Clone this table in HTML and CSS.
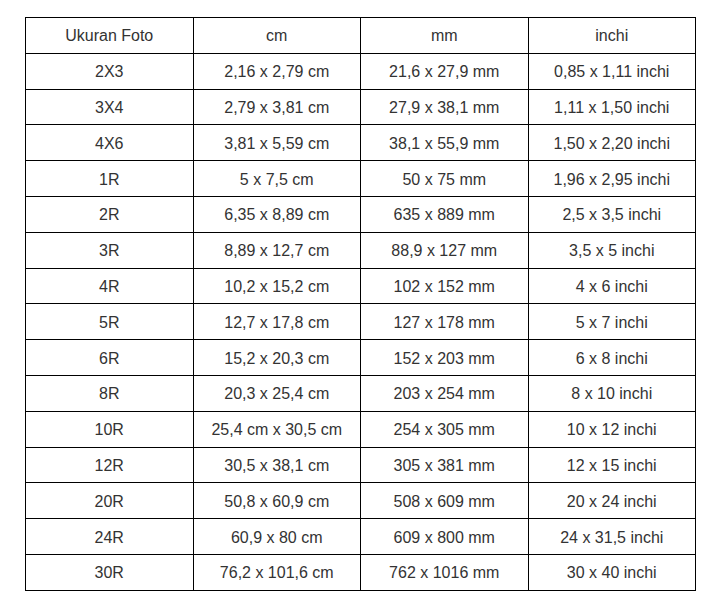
FILE: index.html
```html
<!DOCTYPE html>
<html>
<head>
<meta charset="utf-8">
<link rel="stylesheet" href="styles.css">
</head>
<body>
<table class="sizes">
<thead>
<tr><th>Ukuran Foto</th><th>cm</th><th>mm</th><th>inchi</th></tr>
</thead>
<tbody>
<tr><td>2X3</td><td>2,16 x 2,79 cm</td><td>21,6 x 27,9 mm</td><td>0,85 x 1,11 inchi</td></tr>
<tr><td>3X4</td><td>2,79 x 3,81 cm</td><td>27,9 x 38,1 mm</td><td>1,11 x 1,50 inchi</td></tr>
<tr><td>4X6</td><td>3,81 x 5,59 cm</td><td>38,1 x 55,9 mm</td><td>1,50 x 2,20 inchi</td></tr>
<tr><td>1R</td><td>5 x 7,5 cm</td><td>50 x 75 mm</td><td>1,96 x 2,95 inchi</td></tr>
<tr><td>2R</td><td>6,35 x 8,89 cm</td><td>635 x 889 mm</td><td>2,5 x 3,5 inchi</td></tr>
<tr><td>3R</td><td>8,89 x 12,7 cm</td><td>88,9 x 127 mm</td><td>3,5 x 5 inchi</td></tr>
<tr><td>4R</td><td>10,2 x 15,2 cm</td><td>102 x 152 mm</td><td>4 x 6 inchi</td></tr>
<tr><td>5R</td><td>12,7 x 17,8 cm</td><td>127 x 178 mm</td><td>5 x 7 inchi</td></tr>
<tr><td>6R</td><td>15,2 x 20,3 cm</td><td>152 x 203 mm</td><td>6 x 8 inchi</td></tr>
<tr><td>8R</td><td>20,3 x 25,4 cm</td><td>203 x 254 mm</td><td>8 x 10 inchi</td></tr>
<tr><td>10R</td><td>25,4 cm x 30,5 cm</td><td>254 x 305 mm</td><td>10 x 12 inchi</td></tr>
<tr><td>12R</td><td>30,5 x 38,1 cm</td><td>305 x 381 mm</td><td>12 x 15 inchi</td></tr>
<tr><td>20R</td><td>50,8 x 60,9 cm</td><td>508 x 609 mm</td><td>20 x 24 inchi</td></tr>
<tr><td>24R</td><td>60,9 x 80 cm</td><td>609 x 800 mm</td><td>24 x 31,5 inchi</td></tr>
<tr><td>30R</td><td>76,2 x 101,6 cm</td><td>762 x 1016 mm</td><td>30 x 40 inchi</td></tr>
</tbody>
</table>
</body>
</html>
```
FILE: styles.css
```css
html, body {
  margin: 0;
  padding: 0;
  background: #fff;
}
body {
  padding: 17px 0 0 25px;
  font-family: "Liberation Sans", Arial, sans-serif;
  color: #333;
}
.sizes {
  border-collapse: collapse;
  width: 671px;
  table-layout: fixed;
  font-size: 16px;
}
.sizes th,
.sizes td {
  border: 1px solid #000;
  text-align: center;
  font-weight: normal;
  padding: 2px 0 0;
  height: 35.8px;
  box-sizing: border-box;
  line-height: 18px;
}
```
